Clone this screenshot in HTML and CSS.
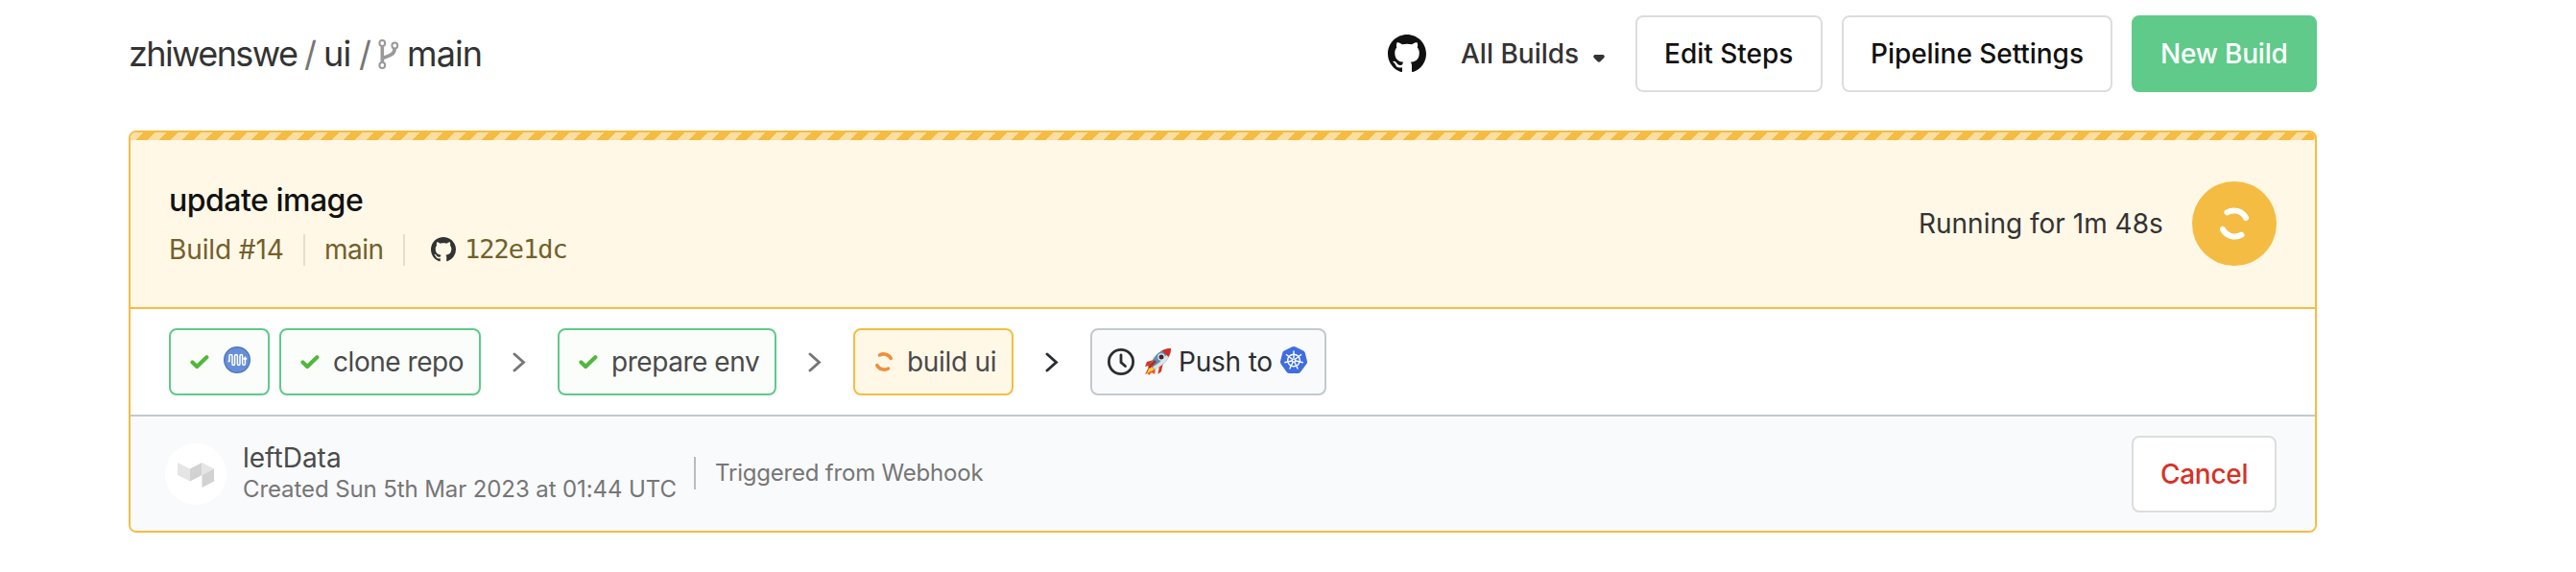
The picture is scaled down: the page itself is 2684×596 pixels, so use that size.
FILE: index.html
```html
<!DOCTYPE html>
<html lang="en">
<head>
<meta charset="utf-8">
<title>zhiwenswe / ui</title>
<link rel="stylesheet" href="styles.css">
</head>
<body>
<svg class="defs" width="0" height="0">
  <symbol id="github" viewBox="0 0 16 16"><path d="M8 0C3.58 0 0 3.58 0 8c0 3.54 2.29 6.53 5.47 7.59.4.07.55-.17.55-.38 0-.19-.01-.82-.01-1.49-2.01.37-2.53-.49-2.69-.94-.09-.23-.48-.94-.82-1.13-.28-.15-.68-.52-.01-.53.63-.01 1.08.58 1.23.82.72 1.21 1.87.87 2.33.66.07-.52.28-.87.51-1.07-1.78-.2-3.64-.89-3.64-3.95 0-.87.31-1.59.82-2.15-.08-.2-.36-1.02.08-2.12 0 0 .67-.21 2.2.82.64-.18 1.32-.27 2-.27s1.36.09 2 .27c1.53-1.04 2.2-.82 2.2-.82.44 1.1.16 1.92.08 2.12.51.56.82 1.27.82 2.15 0 3.07-1.87 3.75-3.65 3.95.29.25.54.73.54 1.48 0 1.07-.01 1.93-.01 2.2 0 .21.15.46.55.38A8.01 8.01 0 0 0 16 8c0-4.42-3.58-8-8-8z"/></symbol>
  <symbol id="check" viewBox="0 0 20 15"><path d="M2.5 7.5 L7.2 12 L17.3 2.3" fill="none" stroke="#50b83c" stroke-width="4.2" stroke-linecap="round" stroke-linejoin="round"/></symbol>
  <symbol id="chevron" viewBox="0 0 14 21"><path d="M2 2 L11.5 10.5 L2 19" fill="none" stroke="currentColor" stroke-width="2.9" stroke-linecap="round"/></symbol>
  <symbol id="spin" viewBox="0 0 36 40"><path d="M10.500 8.300C17 4.500 26 6.500 30 14M6 26C10 33.500 19 35.500 25.500 31.700" fill="none" stroke="currentColor" stroke-width="6" stroke-linecap="round"/></symbol>
</svg>
<header class="top">
  <h1 class="crumbs">
    <span class="t c-org">zhiwenswe</span><span class="t c-slash">/</span><span class="t c-ui">ui</span><span class="t c-slash">/</span>
    <svg class="branch" viewBox="0 0 22 31" fill="none" stroke="#999"><circle cx="4.300" cy="4" r="2.900" stroke-width="2"/><circle cx="17.300" cy="6.500" r="2.900" stroke-width="2"/><circle cx="4.300" cy="27" r="2.900" stroke-width="2"/><path d="M4.300 7.500V23.500M4.500 20C6 17.500 16.500 18.500 17.300 10" stroke-width="3.600"/></svg>
    <span class="t c-main">main</span>
  </h1>
  <nav class="actions">
    <svg class="gh-big"><use href="#github"/></svg>
    <span class="t all">All Builds</span>
    <svg class="caret" viewBox="0 0 12 8"><path d="M1.500 0H10.500Q12.500 .8 11.500 3L7.500 7Q6 8.500 4.500 7L.5 3Q-.5 .8 1.500 0Z" fill="#333"/></svg>
    <a class="btn edit"><span class="t">Edit Steps</span></a>
    <a class="btn settings"><span class="t">Pipeline Settings</span></a>
    <a class="btn new"><span class="t">New Build</span></a>
  </nav>
</header>
<main class="card">
  <div class="stripe"></div>
  <section class="head">
    <div class="info">
      <h2 class="t title">update image</h2>
      <div class="meta">
        <span class="t m-build">Build #14</span><i class="sep"></i><span class="t m-branch">main</span><i class="sep"></i>
        <svg class="gh-small"><use href="#github"/></svg><span class="t m-sha">122e1dc</span>
      </div>
    </div>
    <span class="t running">Running for 1m 48s</span>
    <div class="badge"><svg><use href="#spin"/></svg></div>
  </section>
  <section class="steps">
    <a class="step passed s1"><svg class="check"><use href="#check"/></svg>
      <svg class="tekton" viewBox="0 0 28 28"><circle cx="14" cy="14" r="13.300" fill="#668fd8" stroke="#5078be" stroke-width="1.400"/><path d="M4.500 15.500H6V10Q6 8.500 7.500 8.500T9 10V18Q9 19.500 10.300 19.500T11.600 18V10Q11.600 8.500 13 8.500T14.400 10V18Q14.400 19.500 15.700 19.500T17 18V10Q17 8.500 18.300 8.500T19.600 10V18Q19.600 19.300 21 19.300T22.400 18V12M20.800 13.500L22.400 11.500L24 13.500" fill="none" stroke="#fff" stroke-width="1.500"/></svg></a>
    <a class="step passed s2"><svg class="check"><use href="#check"/></svg><span class="t">clone repo</span></a>
    <svg class="chev"><use href="#chevron"/></svg>
    <a class="step passed s3"><svg class="check"><use href="#check"/></svg><span class="t">prepare env</span></a>
    <svg class="chev"><use href="#chevron"/></svg>
    <a class="step active s4"><svg class="spin"><use href="#spin"/></svg><span class="t">build ui</span></a>
    <svg class="chev dark"><use href="#chevron"/></svg>
    <a class="step waiting s5">
      <svg class="clock" viewBox="0 0 28 28" fill="none" stroke="#2b2e30" stroke-width="2.800"><circle cx="14" cy="14" r="12.600"/><path d="M14 7V14.500L18.500 18.500" stroke-linecap="round"/></svg>
      <svg class="rocket" viewBox="0 0 28 28"><path d="M10 12L3 14L1 19L8 17Z" fill="#d8341f"/><path d="M16 18L14.500 27L18 24L20 15Z" fill="#d8341f"/><path d="M6 17L1 27L4 26L5 28L8 25L11 27L12 21Z" fill="#f4501e"/><path d="M6.500 18.500L3 26L11 22Z" fill="#ffd83c"/><path d="M28 0C19 0 12 5 6 17L11.500 22C21 17 28 10 28 0Z" fill="#5f91b5"/><path d="M28 0C25 6 17 15 9 19.500L11.500 22C21 17 28 10 28 0Z" fill="#d7e4ea"/><path d="M28 0C24 .2 21 1 18.500 2.500L25.500 9C27.200 6 28 3 28 0Z" fill="#d22d20"/><circle cx="18" cy="9" r="3.700" fill="#e9edf0"/><circle cx="18" cy="9" r="2.500" fill="#47222a"/><path d="M5 20L12 13" stroke="#b72c1c" stroke-width="3"/></svg>
      <span class="t">Push to</span>
      <svg class="k8s" viewBox="0 0 28 28"><path d="M14 0Q15 0 16 .6L24 4.500Q25.300 5.200 25.700 6.500L28 15.500Q28.200 17 27.300 18.200L21.500 26Q20.300 28 18.500 28H9.500Q7.700 28 6.500 26.500L.8 18.500Q-.2 17 0 15.500L2.300 6.500Q2.700 5.200 4 4.500L12 .6Q13 0 14 0Z" fill="#3f6de0"/><g stroke="#fff" fill="none" stroke-width="1.400"><circle cx="14" cy="14.500" r="6.300"/><path d="M14 4.500V12M14 14.500L22 8.200M14 14.500L23.700 16.700M14 14.500L18.300 23.500M14 14.500L9.700 23.500M14 14.500L4.300 16.700M14 14.500L6 8.200"/></g><circle cx="14" cy="14.500" r="2.300" fill="#fff"/><circle cx="14" cy="14.500" r="1" fill="#3f6de0"/></svg></a>
  </section>
  <footer class="foot">
    <svg class="avatar" viewBox="0 0 64 64"><circle cx="32" cy="32" r="32" fill="#fff"/><path d="M13 20L26 26.500V39.500L13 33Z" fill="#e5e5e5"/><path d="M26 26.500L38.500 20V33L26 39.500Z" fill="#d2d2d2"/><path d="M38.500 20L51 26.500L38.500 33Z" fill="#e5e5e5"/><path d="M51 26.500V39.500L38.500 46V33Z" fill="#d2d2d2"/></svg>
    <div class="who"><span class="t name">leftData</span><span class="t created">Created Sun 5th Mar 2023 at 01:44 UTC</span></div>
    <i class="sep fsep"></i>
    <span class="t trig">Triggered from Webhook</span>
    <a class="btn cancel"><span class="t">Cancel</span></a>
  </footer>
</main>
</body>
</html>
```
FILE: styles.css
```css
* { box-sizing: border-box; }
body { margin: 0; background: #fff; color: #333; width: 2684px; height: 596px; padding: 16px 270px 0 134px; overflow: hidden; font-family: Inter, "Liberation Sans", sans-serif; font-size: 28px; line-height: 36px; }
h1, h2 { margin: 0; font-weight: 400; }
svg { display: block; flex: none; overflow: visible; }
.defs { position: absolute; }
.t { display: block; flex: none; white-space: nowrap; }
.top { display: flex; width: 2280px; height: 80px; align-items: center; }
.crumbs { display: flex; align-items: center; font-size: 36px; line-height: 44px; }
.c-org { width: 183px; letter-spacing: -1.6px; }
.c-slash { width: 20px; color: #767676; }
.c-ui { width: 37px; letter-spacing: -0.9px; }
.branch { width: 22px; height: 31px; }
.c-main { margin-left: 8px; letter-spacing: -0.9px; }
.actions { display: flex; align-items: center; margin-left: auto; font-weight: 500; }
.gh-big { width: 40px; height: 40px; fill: #111; margin-right: 36px; }
.all { width: 138px; letter-spacing: 0; }
.caret { width: 12px; height: 8px; margin: 9px 32px 0 0; }
.btn { display: flex; align-items: center; height: 80px; border: 2px solid #ddd; border-radius: 8px; background: #fff; color: #111; padding-left: 28px; font-weight: 500; }
.edit { width: 195px; margin-right: 20px; letter-spacing: 0; }
.settings { width: 282px; margin-right: 20px; letter-spacing: -0.05px; }
.new { width: 193px; background: #5fca89; border-color: #5fca89; color: #fff; letter-spacing: -0.2px; }
.card { width: 2280px; height: 419px; margin-top: 40px; border: 2px solid #f5bc43; border-radius: 8px; overflow: hidden; display: flex; flex-direction: column; }
.stripe { height: 8px; flex: none; background: repeating-linear-gradient(135deg, #f5bc43 0 1px, #fbdfa1 1px 9.485px, #f5bc43 9.485px 16.97px); }
.head { display: flex; align-items: center; height: 176px; flex: none; background: #fff8e7; border-bottom: 2px solid #f5bc43; padding: 0 40px; }
.info { display: flex; flex-direction: column; gap: 14px; }
.title { font-size: 32px; line-height: 40px; font-weight: 500; color: #111; letter-spacing: -0.5px; }
.meta { display: flex; align-items: center; color: #735f2b; height: 34px; }
.m-build { width: 140px; letter-spacing: -0.1px; }
.sep { width: 2px; height: 33px; background: #e5dece; margin-right: 20px; flex: none; }
.m-branch { width: 82px; letter-spacing: -0.5px; }
.gh-small { width: 26px; height: 26px; fill: #333; margin: 0 9px 0 7px; }
.m-sha { font-family: "DejaVu Sans Mono", monospace; font-size: 27px; letter-spacing: -1px; }
.running { margin-left: auto; width: 285px; }
.badge { width: 88px; height: 88px; border-radius: 50%; background: #f5bc43; color: #fff; display: flex; align-items: center; justify-content: center; }
.badge svg { width: 36px; height: 40px; }
.steps { display: flex; align-items: center; height: 112px; flex: none; border-bottom: 2px solid #c2cace; padding-left: 40px; }
.step { display: flex; align-items: center; height: 70px; border: 2px solid; border-radius: 8px; flex: none; color: #4a4a4a; }
.passed { border-color: #5fca89; background: #fbfdfa; padding-left: 20px; letter-spacing: -0.45px; }
.active { border-color: #f5bc43; background: #fff8e7; padding-left: 20px; letter-spacing: -0.3px; }
.waiting { border-color: #c2cace; background: #f9fafc; color: #2b2e30; padding-left: 16px; letter-spacing: -0.2px; }
.check { width: 20px; height: 15px; margin-right: 14px; }
.s1 { width: 105px; margin-right: 10px; }
.s1 .check { margin-right: 15px; }
.tekton, .k8s { width: 28px; height: 28px; margin-bottom: 4px; }
.s2 { width: 210px; }
.s3 { width: 228px; }
.s4 { width: 167px; }
.s5 { width: 246px; }
.chev { width: 14px; height: 21px; margin: 0 33px; color: #767676; }
.dark { color: #2b2e30; }
.spin { width: 22px; height: 24px; color: #f18f3d; margin: 0 13px 0 -1px; }
.clock { width: 28px; height: 28px; margin-right: 10px; }
.rocket { width: 28px; height: 28px; margin-right: 8px; }
.s5 .t { width: 106px; }
.foot { display: flex; align-items: center; flex: 1; background: #f9fafc; padding: 0 40px 0 36px; }
.avatar { width: 64px; height: 64px; }
.who { display: flex; flex-direction: column; width: 470px; margin-left: 17px; }
.name { line-height: 34px; color: #4a4a4a; }
.created { font-size: 24px; line-height: 32px; color: #767676; letter-spacing: -0.1px; }
.fsep { height: 34px; background: #bbb; margin-right: 20px; }
.who, .fsep, .trig { margin-bottom: 1px; }
.trig { font-size: 24px; color: #767676; letter-spacing: -0.2px; }
.cancel { width: 151px; margin-left: auto; color: #d63226; letter-spacing: -0.3px; }
```
